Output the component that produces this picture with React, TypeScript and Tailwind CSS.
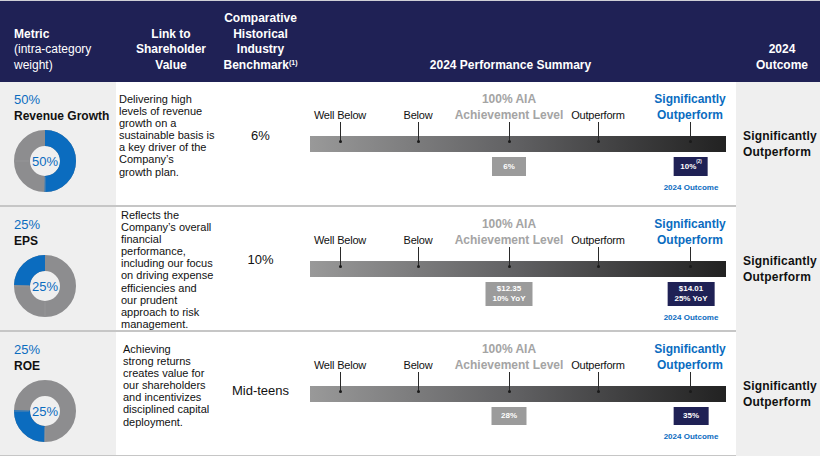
import React from "react";

const BLUE = "#0b6cbf";
const NAVY = "#1f2155";

type Box = { lines: string[]; sup?: string; w: number; h: number; color: string; outcome?: boolean };
type Row = {
  pct: string;
  name: string;
  donut: { start: number; len: number };
  desc: string[];
  descPad: string;
  bench: string;
  benchPad: string;
  boxes: { x: number; box: Box }[];
};

const rows: Row[] = [
  {
    pct: "50%",
    name: "Revenue Growth",
    donut: { start: 0, len: 0.5 },
    desc: ["Delivering high", "levels of revenue", "growth on a", "sustainable basis is", "a key driver of the", "Company\u2019s", "growth plan."],
    descPad: "pt-[11px] pl-[3px]",
    bench: "6%",
    benchPad: "pt-[46px]",
    boxes: [
      { x: 206, box: { lines: ["6%"], w: 34, h: 19, color: "#9b9b9b" } },
      { x: 388, box: { lines: ["10%"], sup: "(2)", w: 34, h: 19, color: NAVY, outcome: true } },
    ],
  },
  {
    pct: "25%",
    name: "EPS",
    donut: { start: 0.75, len: 0.25 },
    desc: ["Reflects the", "Company\u2019s overall", "financial", "performance,", "including our focus", "on driving expense", "efficiencies and", "our prudent", "approach to risk", "management."],
    descPad: "pt-[2px] pl-[5px]",
    bench: "10%",
    benchPad: "pt-[45px]",
    boxes: [
      { x: 206, box: { lines: ["$12.35", "10% YoY"], w: 47, h: 24, color: "#9b9b9b" } },
      { x: 388, box: { lines: ["$14.01", "25% YoY"], w: 47, h: 24, color: NAVY, outcome: true } },
    ],
  },
  {
    pct: "25%",
    name: "ROE",
    donut: { start: 0.5, len: 0.25 },
    desc: ["Achieving", "strong returns", "creates value for", "our shareholders", "and incentivizes", "disciplined capital", "deployment."],
    descPad: "pt-[11px] pl-[7px]",
    bench: "Mid-teens",
    benchPad: "pt-[51px]",
    boxes: [
      { x: 206, box: { lines: ["28%"], w: 35, h: 18, color: "#9b9b9b" } },
      { x: 388, box: { lines: ["35%"], w: 35, h: 18, color: NAVY, outcome: true } },
    ],
  },
];

function Donut({ start, len, label }: { start: number; len: number; label: string }) {
  const r = 23;
  const c = 2 * Math.PI * r;
  return (
    <div className="relative w-[62px] h-[62px]">
      <svg width="62" height="62" viewBox="0 0 62 62" className="absolute inset-0">
        <circle cx="31" cy="31" r={r} fill="none" stroke="#8d8d8f" strokeWidth="16" />
        <circle
          cx="31"
          cy="31"
          r={r}
          fill="none"
          stroke={BLUE}
          strokeWidth="16"
          strokeDasharray={`${len * c} ${c}`}
          strokeDashoffset={-start * c}
          transform="rotate(-90 31 31)"
        />
        <line x1="0" y1="31" x2="15" y2="31" stroke="#9c9c9e" strokeWidth="0.6" />
        <line x1="31" y1="47" x2="31" y2="62" stroke="#9c9c9e" strokeWidth="0.6" />
      </svg>
      <div className="absolute inset-0 flex items-center justify-center text-[13px] leading-none" style={{ color: BLUE }}>
        {label}
      </div>
    </div>
  );
}

const labels = [
  { x: 37, lines: ["Well Below"], kind: "n" },
  { x: 115, lines: ["Below"], kind: "n" },
  { x: 206, lines: ["100% AIA", "Achievement Level"], kind: "g" },
  { x: 295, lines: ["Outperform"], kind: "n" },
  { x: 387, lines: ["Significantly", "Outperform"], kind: "b" },
];

function Perf({ row }: { row: Row }) {
  return (
    <div className="relative h-full">
      {labels.map((l) => (
        <div
          key={l.x}
          className={`absolute top-[10px] h-[31px] w-[130px] -translate-x-1/2 flex flex-col justify-end items-center text-center whitespace-nowrap ${
            l.kind === "n"
              ? "text-[11px] leading-[15.5px] text-[#111] tracking-[-0.2px]"
              : l.kind === "g"
              ? "text-[12px] font-bold leading-[15.5px] text-[#a4a4a4]"
              : "text-[12px] font-bold leading-[15.5px] text-[#0b6cbf]"
          }`}
          style={{ left: l.x }}
        >
          {l.lines.map((t) => (
            <div key={t}>{t}</div>
          ))}
        </div>
      ))}
      <div className="absolute left-[7px] top-[54px] w-[416px] h-[16px] bg-gradient-to-r from-[#999999] via-[#606062] to-[#222222]" />
      {labels.map((l) => (
        <div key={"t" + l.x} className="absolute top-[40px]" style={{ left: l.x }}>
          <div className="w-px h-[20px] bg-[#2a2a2a]" />
          <div className="w-[3px] h-[3px] -ml-[1px] -mt-[2px] rounded-full bg-[#1a1a1a]" />
        </div>
      ))}
      {row.boxes.map(({ x, box }) => (
        <div key={x} className="absolute top-[75px] -translate-x-1/2 flex flex-col items-center" style={{ left: x }}>
          <div
            className="flex flex-col items-center justify-center text-white text-[8px] font-bold leading-[10px]"
            style={{ width: box.w, height: box.h, background: box.color }}
          >
            {box.lines.map((t) => (
              <div key={t}>
                {t}
                {box.sup && <sup className="text-[4.5px] align-super">{box.sup}</sup>}
              </div>
            ))}
          </div>
          {box.outcome && (
            <div className="mt-[6px] text-[8px] font-bold whitespace-nowrap" style={{ color: BLUE }}>
              2024 Outcome
            </div>
          )}
        </div>
      ))}
    </div>
  );
}

export default function App() {
  return (
    <div
      className="w-[820px] h-[456px] overflow-hidden bg-white text-[#111]"
      style={{ fontFamily: '"Liberation Sans", Arial, sans-serif' }}
    >
      {/* header */}
      <div className="grid grid-cols-[116px_102px_85px_433px_84px] h-[82px] bg-[#1f2155] border-t border-[#cfcfd6] text-white text-[12px] leading-[15.5px]">
        <div className="flex flex-col justify-end pb-[9px] pl-[14px]">
          <div className="font-bold">Metric</div>
          <div>(intra-category</div>
          <div>weight)</div>
        </div>
        <div className="flex flex-col justify-end items-center pb-[9px] pl-[8px] font-bold text-center">
          <div>Link to</div>
          <div>Shareholder</div>
          <div>Value</div>
        </div>
        <div className="flex flex-col justify-end items-center pb-[9px] font-bold text-center">
          <div>Comparative</div>
          <div>Historical</div>
          <div>Industry</div>
          <div>
            Benchmark<sup className="text-[7px]">(1)</sup>
          </div>
        </div>
        <div className="flex flex-col justify-end items-center pb-[9px] pr-[18px] font-bold">
          <div>2024 Performance Summary</div>
        </div>
        <div className="flex flex-col justify-end items-center pb-[9px] pl-[8px] font-bold text-center">
          <div>2024</div>
          <div>Outcome</div>
        </div>
      </div>

      {rows.map((row, i) => (
        <div key={i} className="grid grid-cols-[116px_102px_85px_433px_84px] h-[125px]">
          <div className="bg-[#efefef] border-b-2 border-[#c6c6c6] pl-[14px] pt-[10px]">
            <div className="text-[13px] leading-[16px]" style={{ color: BLUE }}>
              {row.pct}
            </div>
            <div className="text-[12px] font-bold leading-[16px]">{row.name}</div>
            <div className="mt-[6px]">
              <Donut start={row.donut.start} len={row.donut.len} label={row.pct} />
            </div>
          </div>
          <div className={`border-b-2 border-[#c6c6c6] text-[11px] leading-[12.1px] text-[#111] ${row.descPad}`}>
            {row.desc.map((t) => (
              <div key={t} className="whitespace-nowrap">
                {t}
              </div>
            ))}
          </div>
          <div className={`border-b-2 border-[#c6c6c6] text-center text-[13px] leading-[16px] ${row.benchPad}`}>
            {row.bench}
          </div>
          <div className="border-b-2 border-[#c6c6c6]">
            <Perf row={row} />
          </div>
          <div className="bg-[#efefef] pl-[7px] pt-[46px] text-[12px] font-bold leading-[16px] tracking-[0.2px]">
            <div>Significantly</div>
            <div>Outperform</div>
          </div>
        </div>
      ))}
    </div>
  );
}
